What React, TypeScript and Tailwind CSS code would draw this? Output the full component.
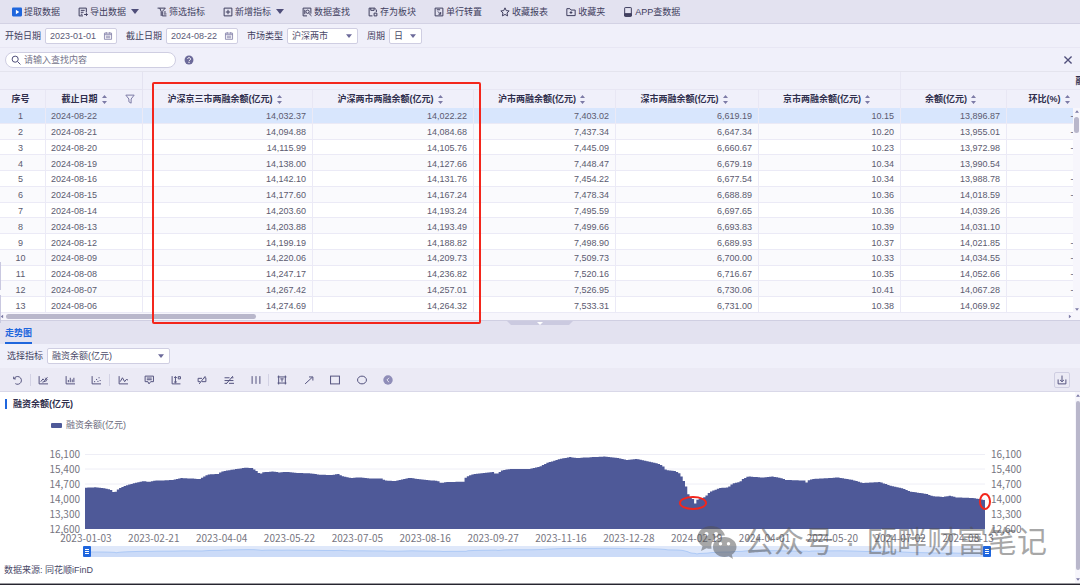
import type { FunctionComponent, ReactNode } from "react";
import { useState } from "react";
import { clsx } from "clsx";

const ICONS: Record<string, ReactNode> = {
  extract: (
    <>
      <rect x="0" y="1" width="18" height="16" rx="2" fill="#1f66dd" stroke="none" />
      <path d="M7 5v8l6-4z" fill="#fff" stroke="none" />
    </>
  ),
  export: <path d="M15 10V2H2v14h7M5 6h7M5 9.500h5M5 13h3M11 13.500h6M14.500 11l2.500 2.500-2.500 2.500" />,
  filter: <path d="M1 2h14L9.500 8v8H17M5 2l2.500 6v8M12 9h4M12 12.500h5" />,
  add: <path d="M2 2h14v14H2zM9 5v8M5 9h8" />,
  find: (
    <>
      <path d="M9 16H2V2h14v10M5 5v8" />
      <circle cx="10" cy="8.500" r="3" />
      <path d="M12 11l5 5" />
    </>
  ),
  save: (
    <>
      <path d="M8 16H2V2h10l3 3v4M5 2v4h6V2" />
      <path d="M11 11h5v5h-5z" />
    </>
  ),
  transpose: <path d="M2 2h14v14H2zM5 5h6M7 8l5 5M12 9v4H8" />,
  star: <path d="M9 1.500l2.300 5 5.200.6-3.900 3.600 1.100 5.300L9 13.400 4.300 16l1.100-5.300L1.500 7.100l5.200-.6z" />,
  folder: <path d="M1.500 15.500V3H7l2 2.500h7.500v10zM9 7.500v5M6.500 10h5" />,
  app: (
    <>
      <rect x="3" y="1" width="12" height="16" rx="1" />
      <path d="M3 12h12v4H3z" fill="currentColor" />
    </>
  ),
};

const TOOLBAR = [
  { icon: "extract", label: "提取数据" },
  { icon: "export", label: "导出数据", caret: true },
  { icon: "filter", label: "筛选指标" },
  { icon: "add", label: "新增指标", caret: true },
  { icon: "find", label: "数据查找" },
  { icon: "save", label: "存为板块" },
  { icon: "transpose", label: "单行转置" },
  { icon: "star", label: "收藏报表" },
  { icon: "folder", label: "收藏夹" },
  { icon: "app", label: "APP查数据" },
];

const COLUMNS = [
  "沪深京三市两融余额(亿元)",
  "沪深两市两融余额(亿元)",
  "沪市两融余额(亿元)",
  "深市两融余额(亿元)",
  "京市两融余额(亿元)",
  "余额(亿元)",
  "环比(%)",
];

const ROWS = [
  ["2024-08-22", "14,032.37", "14,022.22", "7,403.02", "6,619.19", "10.15", "13,896.87", "-0.42"],
  ["2024-08-21", "14,094.88", "14,084.68", "7,437.34", "6,647.34", "10.20", "13,955.01", "-0.13"],
  ["2024-08-20", "14,115.99", "14,105.76", "7,445.09", "6,660.67", "10.23", "13,972.98", "-0.13"],
  ["2024-08-19", "14,138.00", "14,127.66", "7,448.47", "6,679.19", "10.34", "13,990.54", "0.01"],
  ["2024-08-16", "14,142.10", "14,131.76", "7,454.22", "6,677.54", "10.34", "13,988.78", "-0.21"],
  ["2024-08-15", "14,177.60", "14,167.24", "7,478.34", "6,688.89", "10.36", "14,018.59", "-0.15"],
  ["2024-08-14", "14,203.60", "14,193.24", "7,495.59", "6,697.65", "10.36", "14,039.26", "0.06"],
  ["2024-08-13", "14,203.88", "14,193.49", "7,499.66", "6,693.83", "10.39", "14,031.10", "0.07"],
  ["2024-08-12", "14,199.19", "14,188.82", "7,498.90", "6,689.93", "10.37", "14,021.85", "-0.09"],
  ["2024-08-09", "14,220.06", "14,209.73", "7,509.73", "6,700.00", "10.33", "14,034.55", "-0.13"],
  ["2024-08-08", "14,247.17", "14,236.82", "7,520.16", "6,716.67", "10.35", "14,052.66", "-0.10"],
  ["2024-08-07", "14,267.42", "14,257.01", "7,526.95", "6,730.06", "10.41", "14,067.28", "-0.02"],
  ["2024-08-06", "14,274.69", "14,264.32", "7,533.31", "6,731.00", "10.38", "14,069.92", "0.05"],
];

const Y_TICKS = ["16,100", "15,400", "14,700", "14,000", "13,300", "12,600"];

const X_TICKS = [
  "2023-01-03",
  "2023-02-21",
  "2023-04-04",
  "2023-05-22",
  "2023-07-05",
  "2023-08-16",
  "2023-09-27",
  "2023-11-16",
  "2023-12-28",
  "2024-02-19",
  "2024-04-01",
  "2024-05-20",
  "2024-07-02",
  "2024-08-13",
];

// turning points of the series, in chart units (900 wide, 75 high)
const POINTS: [number, number][] = [
  [0, 33.7], [10, 33.3], [18, 34], [24, 35.3], [28, 36.7], [29, 40], [32, 36], [36, 33.5],
  [41, 31.5], [48, 29.5], [59, 27], [64, 28], [70, 26.7], [87, 26], [96, 24], [115, 25],
  [120, 22], [123, 20.5], [133, 20], [137, 17.5], [147, 15.7], [161, 13.7], [167, 14],
  [171, 16.5], [175, 20], [178, 18.3], [187, 17.5], [195, 18.5], [200, 17.8], [213, 19],
  [225, 19.3], [235, 20.7], [248, 21], [253, 19.7], [257, 22], [266, 24], [275, 23.3],
  [285, 24.5], [297, 24.5], [300, 26.5], [311, 27], [325, 23.7], [332, 25], [353, 27],
  [356, 29], [362, 28], [379, 27.7], [381, 23], [387, 20.5], [398, 19], [409, 18],
  [411, 20.5], [417, 16.5], [425, 15], [445, 15], [455, 12.5], [462, 9], [475, 5], [485, 3],
  [492, 4], [520, 2.5], [533, 4], [542, 6], [552, 5], [573, 9.5], [578, 12], [581, 16],
  [590, 17], [595, 19.5], [598, 25], [601, 32], [603, 39.5], [605, 43], [608, 45],
  [610, 50], [612, 46], [620, 43], [625, 38], [635, 34], [643, 33.5], [648, 29.5],
  [655, 28], [658, 25], [663, 22.5], [677, 23.5], [688, 22.5], [698, 24.5], [701, 26],
  [720, 26.5], [722, 29], [724, 26], [728, 25], [753, 23.5], [768, 26], [778, 29],
  [795, 28], [805, 31.5], [818, 34.5], [825, 37.5], [842, 40], [847, 42], [858, 43],
  [865, 41.7], [872, 43.5], [888, 44], [897, 45.5], [900, 46.5],
];

const BAR_COUNT = 396;

function valueAt(x: number) {
  const i = Math.max(1, POINTS.findIndex((p) => p[0] >= x));
  const [x0, y0] = POINTS[i - 1];
  const [x1, y1] = POINTS[i];
  return y0 + ((y1 - y0) * (x - x0)) / (x1 - x0);
}

const BAR_PATH = (() => {
  const step = 900 / BAR_COUNT;
  let d = "M0 75";
  for (let i = 0; i < BAR_COUNT; i++) {
    const y = valueAt((i + 0.5) * step).toFixed(1);
    d += `V${y}H${((i + 1) * step).toFixed(2)}`;
  }
  return `${d}V75Z`;
})();

const OVERVIEW_LINE = POINTS.map(([x, y]) => `${x} ${(2 + y * 0.12).toFixed(2)}`).join("L");

const CHART_TOOLS: { label: string; divider?: boolean; art: ReactNode }[] = [
  { label: "重置", art: <path d="M3 3v4h4M3.500 7A7 7 0 1 1 6 15.500" /> },
  { label: "面积图", divider: true, art: <path d="M2 2v14h16M5 12l4-5 3 3 5-6M8 13l8-3M13 5l4 4" /> },
  { label: "柱状图", art: <path d="M2 2v14h16M6 13V9M9.500 13V5M13 13V8M16 13V5" /> },
  { label: "散点图", art: <path d="M2 2v14h16M5.500 12h2M9 8h2M11.500 11.500h2M13.500 5h2M15.500 10h2" /> },
  { label: "折线图", divider: true, art: <path d="M2 2v14h16M4 12l4-7 4 7 3-4 3 1" /> },
  { label: "标注", art: <path d="M2 2h15v10h-5l-3 4-2-4H2zM5 5.500h9M5 8.500h9" /> },
  { label: "坐标轴", art: <path d="M2 2v14h15M8 3v11M5.500 5L8 3l2.500 2M5.500 12L8 14l2.500-2M13 3h4v4h-4z" /> },
  { label: "平均线", art: <path d="M2 12V6h7M2 12h4M9 12h7V5h-3M4 16L15 2" /> },
  { label: "对比线", art: <path d="M1 5h9M1 10h16M1 15h4M9 15h9M4 16L16 2M13 5h4" /> },
  { label: "网格线", art: <path d="M2 2v14M9 2v14M16 2v14" /> },
  {
    label: "文本",
    divider: true,
    art: <path d="M3 1v16M15 1v16M1 3.500h16M1 14.500h16M6 7h6M9 7v5" />,
  },
  { label: "箭头", art: <path d="M2 16L15 4M9 3.500h7V10" /> },
  { label: "矩形", art: <rect x="1" y="2" width="16" height="14" /> },
  { label: "椭圆", art: <ellipse cx="9" cy="9" rx="8" ry="7" /> },
  {
    label: "收起",
    art: (
      <>
        <circle cx="9" cy="9" r="8.500" fill="#8f8db8" stroke="none" />
        <path d="M11 5L7 9l4 4" stroke="#e3e2f0" />
      </>
    ),
  },
];

function Icon({ children, className = "size-2.5" }: { children: ReactNode; className?: string }) {
  return (
    <svg
      viewBox="0 0 18 18"
      className={clsx("shrink-0 overflow-visible", className)}
      fill="none"
      stroke="currentColor"
      strokeWidth="1.8"
      aria-hidden="true"
    >
      {children}
    </svg>
  );
}

function Caret({ className }: { className?: string }) {
  return (
    <svg viewBox="0 0 8 5" className={clsx("shrink-0", className)} fill="currentColor" aria-hidden="true">
      <path d="M0 0h8L4 5z" />
    </svg>
  );
}

function SortMark() {
  return (
    <svg viewBox="0 0 5 9" className="w-[5px] h-[9px] shrink-0" fill="#7d7ba6" aria-hidden="true">
      <path d="M2.500 0L5 3H0zM2.500 9L0 6h5z" />
    </svg>
  );
}

function DateField({ id, label, value }: { id: string; label: string; value: string }) {
  return (
    <div className="flex items-center gap-1">
      <label htmlFor={id}>{label}</label>
      <div className="flex h-4 w-18 items-center rounded-xs border border-[#cfcee2] bg-white pr-1">
        <input
          id={id}
          defaultValue={value}
          className="w-full min-w-0 pl-1 text-[9px] leading-3 text-[#5b5a78] outline-none"
        />
        <Icon className="size-2 text-[#7d7ba6]">
          <path d="M1 2.500h16v14H1zM1 6h16M5 0v4M13 0v4M4 9.500h10M4 13h10" />
        </Icon>
      </div>
    </div>
  );
}

function SelectField({
  id,
  label,
  value,
  width,
}: {
  id: string;
  label: string;
  value: string;
  width: string;
}) {
  return (
    <div className="flex items-center gap-1">
      <label htmlFor={id}>{label}</label>
      <div className={clsx("relative", width)}>
        <select
          id={id}
          className="block h-4 w-full appearance-none rounded-xs border border-[#cfcee2] bg-white pl-1 text-[9px] leading-3 text-[#4a4968] outline-none"
        >
          <option>{value}</option>
        </select>
        <Caret className="pointer-events-none absolute right-1.5 top-1.5 h-1 w-1.5 text-[#6c6a9a]" />
      </div>
    </div>
  );
}

function DataTable() {
  return (
    <table className="h-[241px] w-[1268px] table-fixed border-separate border-spacing-0 leading-3">
      <colgroup>
        <col className="w-[46px]" />
        <col className="w-[97px]" />
        <col className="w-[170px]" />
        <col className="w-[161px]" />
        <col className="w-[142px]" />
        <col className="w-[143px]" />
        <col className="w-[142px]" />
        <col className="w-[106px]" />
        <col className="w-[91px]" />
        <col />
      </colgroup>
      <thead className="bg-[#f0f0fa] text-[#2f2e4c]">
        <tr className="h-[18px]">
          <td colSpan={2} className="border-r border-b border-[#e4e3f1]" />
          <td colSpan={5} className="border-r border-b border-[#e8e7f4]" />
          <th colSpan={3} scope="colgroup" className="border-b border-[#e8e7f4] font-bold">
            融资
          </th>
        </tr>
        <tr className="h-[18px]">
          <th scope="col" className="border-r border-[#e8e7f4] pr-1 font-bold">
            序号
          </th>
          <th scope="col" className="border-r border-[#e4e3f1] font-bold">
            <div className="flex items-center">
              <span className="flex flex-1 items-center justify-center gap-1 pr-0.5">
                截止日期
                <SortMark />
              </span>
              <button type="button" aria-label="筛选" className="w-[18px] pl-px text-[#7d7ba6]">
                <Icon>
                  <path d="M1.500 2h15L11 9v7.500L7 14V9z" />
                </Icon>
              </button>
            </div>
          </th>
          {COLUMNS.map((column) => (
            <th key={column} scope="col" className="border-r border-[#e8e7f4] font-bold">
              <div className="flex items-center justify-center gap-1 pr-1.5 whitespace-nowrap">
                {column}
                <SortMark />
              </div>
            </th>
          ))}
          <td />
        </tr>
      </thead>
      <tbody className="text-[#5b5a70] [&_td]:pt-0.5">
        {ROWS.map(([date, ...values], index) => (
          <tr
            key={date}
            className={clsx(index === 0 ? "bg-[#d8e6fd]" : index % 2 ? "bg-[#fafafd]" : "bg-white")}
          >
            <td className="border-r border-b border-[#ebeaf6] pr-1 text-center">{index + 1}</td>
            <td className="border-r border-b border-[#ebeaf6] pl-[5px]">{date}</td>
            {values.map((value, i) => (
              <td key={COLUMNS[i]} className="border-r border-b border-[#ebeaf6] pr-1.5 text-right">
                {value}
              </td>
            ))}
            <td className="border-b border-[#ebeaf6]" />
          </tr>
        ))}
      </tbody>
    </table>
  );
}

function AxisLabels({ className }: { className: string }) {
  return (
    <div className={clsx("flex flex-col text-[10px] leading-[15px] text-[#76757f]", className)}>
      {Y_TICKS.map((tick) => (
        <span key={tick}>{tick}</span>
      ))}
    </div>
  );
}

const THUMB =
  "pointer-events-none absolute inset-x-[-4px] top-0 h-[11px] appearance-none bg-transparent [&::-webkit-slider-thumb]:pointer-events-auto [&::-webkit-slider-thumb]:h-[11px] [&::-webkit-slider-thumb]:w-2 [&::-webkit-slider-thumb]:appearance-none [&::-webkit-slider-thumb]:rounded-[1px] [&::-webkit-slider-thumb]:border-x-2 [&::-webkit-slider-thumb]:border-y-3 [&::-webkit-slider-thumb]:border-[#1f66dd] [&::-webkit-slider-thumb]:bg-[repeating-linear-gradient(#fff_0_1px,#1f66dd_1px_2px)]";

function Chart() {
  return (
    <div className="min-w-0 flex-1 pb-1.5">
      <h2 className="flex h-6 items-center gap-1.5 pl-[5px] text-[9px] font-bold text-[#2f2e4c]">
        <span className="h-2.5 w-0.5 bg-[#1f66dd]" />
        融资余额(亿元)
      </h2>
      <div className="flex h-[18px] items-center gap-1 pl-[51px] text-[#6b6a7c]">
        <span className="h-[5px] w-[11px] rounded-[1px] bg-[#4e5998]" />
        融资余额(亿元)
      </div>

      <div className="mt-3 flex font-['Noto_Sans_CJK_SC',sans-serif]">
        <AxisLabels className="w-20 items-end" />
        <div className="relative ml-[5px] flex-1 pt-2">
          <svg viewBox="0 0 900 75" preserveAspectRatio="none" className="block h-[75px] w-full">
            <path
              d="M0 .5h900M0 15h900M0 30h900M0 45h900M0 60h900"
              stroke="#eeeef6"
              vectorEffect="non-scaling-stroke"
            />
            <path d={BAR_PATH} fill="#4e5998" />
          </svg>
          <span className="absolute right-[278px] top-[50px] h-3.5 w-7 rounded-[50%] border-2 border-[#f3261c]" />
          <span className="absolute -right-1.5 top-[47px] h-[17px] w-3 rounded-[50%] border-2 border-[#f3261c]" />
        </div>
        <AxisLabels className="w-[90px] pl-1.5" />
      </div>
      <div className="-mt-1 mr-[73px] ml-[52px] flex h-3 font-['Noto_Sans_CJK_SC',sans-serif] text-[10px] leading-3 text-[#76757f]">
        {X_TICKS.map((tick) => (
          <span key={tick} className="flex flex-1 justify-center">
            {tick}
          </span>
        ))}
      </div>

      <div className="relative mt-0.5 mr-[88px] ml-[87px] h-[11px] bg-[#dfe8fa]">
        <svg viewBox="0 0 900 11" preserveAspectRatio="none" className="block h-full w-full">
          <path d={`M0 11L${OVERVIEW_LINE}L900 11Z`} fill="#cbdbf8" />
          <path
            d={`M${OVERVIEW_LINE}`}
            fill="none"
            stroke="#aecaf6"
            vectorEffect="non-scaling-stroke"
          />
        </svg>
        <input type="range" aria-label="开始" defaultValue={0} className={THUMB} />
        <input type="range" aria-label="结束" defaultValue={100} className={THUMB} />
      </div>
      <p className="mt-1.5 h-3.5 pl-1 leading-3.5 text-[#4a4968]">数据来源: 同花顺iFinD</p>
    </div>
  );
}

function Watermark() {
  return (
    <div className="pointer-events-none absolute right-[33px] top-[130px] flex items-center text-[30px] leading-10 font-normal text-[#505050]/50">
      <svg viewBox="0 0 40 34" className="mr-[7px] h-[34px] w-10" aria-hidden="true">
        <path
          fill="currentColor"
          fillRule="evenodd"
          d="M14 1C6.500 1 .5 6 .5 12.500c0 3.600 2 6.700 5 8.800L4 26l5.500-2.800c1.800.5 3.200.7 5 .6C13 16 19 10 28 10.500 26.500 5 21 1 14 1zM9.500 7a2 2 0 1 1 0 4 2 2 0 0 1 0-4zm9.500 0a2 2 0 1 1 0 4 2 2 0 0 1 0-4z"
        />
        <path
          fill="currentColor"
          fillRule="evenodd"
          d="M27.500 12C21 12 16 16.400 16 22s5 10 11.500 10c1.500 0 2.800-.3 4.200-.7L36 34l-1.200-4.200c2.800-2 4.700-4.600 4.700-7.800 0-5.600-5.500-10-12-10zM23.500 17a1.700 1.700 0 1 1 0 3.400 1.700 1.700 0 0 1 0-3.400zm8 0a1.700 1.700 0 1 1 0 3.400 1.700 1.700 0 0 1 0-3.400z"
        />
      </svg>
      <span>公众号</span>
      <span className="w-[33px] text-center">·</span>
      <span>瓯畔财富笔记</span>
    </div>
  );
}

const App: FunctionComponent = () => {
  const [keyword, setKeyword] = useState("");

  return (
    <div className="w-full overflow-hidden bg-[#f0f0fa] font-['Liberation_Sans','Noto_Sans_CJK_SC',sans-serif] text-[9px] leading-3 text-[#3f3e5e]">
      <header className="flex h-6 items-center gap-[18px] border-b border-[#d3d2e4] bg-[#e3e2f0] pl-3">
        {TOOLBAR.map((item) => (
          <button
            key={item.label}
            type="button"
            className="flex items-center gap-0.5 whitespace-nowrap text-[#3f3e5e]"
          >
            <Icon>{ICONS[item.icon]}</Icon>
            {item.label}
            {item.caret && <Caret className="ml-[3px] h-[5px] w-2 text-[#4f4e7a]" />}
          </button>
        ))}
      </header>

      <div className="flex h-6 items-center gap-[9px] border-b border-[#e8e7f4] pl-[5px]">
        <DateField id="start" label="开始日期" value="2023-01-01" />
        <DateField id="end" label="截止日期" value="2024-08-22" />
        <SelectField id="market" label="市场类型" value="沪深两市" width="w-[71px]" />
        <SelectField id="period" label="周期" value="日" width="w-[33px]" />
      </div>

      <div className="flex h-6 items-center border-b border-[#e4e4ee] pl-[5px]">
        <label className="flex h-4 w-[171px] items-center gap-[3px] rounded-full border border-[#cfcee2] bg-white pl-[5px] text-[#4f4e7a]">
          <Icon>
            <circle cx="7.500" cy="7.500" r="5.500" />
            <path d="M12 12l5 5" />
          </Icon>
          <input
            value={keyword}
            onChange={(e) => setKeyword(e.target.value)}
            placeholder="请输入查找内容"
            className="w-full min-w-0 text-[9px] leading-3 outline-none placeholder:text-[#76758c]"
          />
        </label>
        <button type="button" aria-label="帮助" className="ml-2">
          <Icon>
            <circle cx="9" cy="9" r="8" fill="#6c6a9a" stroke="none" />
            <path d="M6.500 7.200a2.600 2.600 0 1 1 4 2.300Q9 10.200 9 11.200M9 12.500v2" stroke="#fff" />
          </Icon>
        </button>
        <button type="button" aria-label="关闭" className="mr-2 ml-auto text-[#4f4e7a]">
          <Icon className="size-2">
            <path d="M1 1l16 16M17 1L1 17" strokeWidth="3" />
          </Icon>
        </button>
      </div>

      <section className="relative">
        <div className="overflow-hidden">
          <DataTable />
        </div>
        <div className="absolute top-9 right-0 flex h-[205px] w-[7px] flex-col items-center bg-[#f7f6fc] py-0.5">
          <Caret className="h-[3px] w-1 rotate-180 text-[#7d7ba6]" />
          <span className="mt-1 h-4 w-[5px] rounded-full bg-[#b9b7cb]" />
          <Caret className="mt-auto h-[3px] w-1 text-[#7d7ba6]" />
        </div>
        <div className="flex h-2 items-center border-b border-[#d0cfe2] bg-[#f7f6fc] pr-2">
          <Caret className="h-[3px] w-1 rotate-90 text-[#7d7ba6]" />
          <span className="ml-0.5 h-[5px] w-[250px] rounded-full bg-[#b9b7cb]" />
          <Caret className="ml-auto h-[3px] w-1 -rotate-90 text-[#7d7ba6]" />
        </div>
        <span className="absolute top-[190px] left-0 h-7 w-px bg-[#c9c8e0]" />
        <span className="absolute top-[223px] left-0 h-7 w-px bg-[#c9c8e0]" />
        {/* highlight round the two total columns */}
        <span className="absolute top-2.5 left-[152px] h-[242px] w-[329px] rounded-xs border-2 border-[#f3261c]" />
      </section>

      <nav className="flex h-[23px] items-stretch justify-between bg-[#e3e2f0] pl-[5px]">
        <button type="button" className="border-b-2 border-[#1f66dd] pt-[3px] font-bold text-[#1f66dd]">
          走势图
        </button>
        <button type="button" aria-label="折叠" className="self-start">
          <svg viewBox="0 0 66 4" className="h-1 w-[66px]" aria-hidden="true">
            <path d="M0 0h66l-4 4H4z" fill="#cbcae0" />
            <path d="M30 1h6l-3 3z" fill="#fff" />
          </svg>
        </button>
        <span className="w-8" />
      </nav>

      <div className="flex h-6 items-center pl-[7px]">
        <SelectField id="metric" label="选择指标" value="融资余额(亿元)" width="w-[123px]" />
      </div>

      <div className="flex h-6 items-center justify-between border-b border-[#d9d8e8] bg-[#ebeaf5] pr-2.5 pl-[3px]">
        <div className="flex w-[398px] text-[#55547f]">
          {CHART_TOOLS.map((tool) => (
            <button
              key={tool.label}
              type="button"
              aria-label={tool.label}
              className={clsx(
                "flex flex-1 items-center justify-center border-l py-px",
                tool.divider ? "border-[#d3d2e4]" : "border-transparent"
              )}
            >
              <Icon>{tool.art}</Icon>
            </button>
          ))}
        </div>
        <button
          type="button"
          aria-label="下载"
          className="flex size-4 items-center justify-center rounded-xs border border-[#cfcee2] text-[#55547f]"
        >
          <Icon>
            <path d="M2 8v8h14V8M9 1v11M5.500 9L9 12l3.500-3" />
          </Icon>
        </button>
      </div>

      <section className="relative flex bg-white">
        <Chart />
        <div className="flex w-[5px] flex-col items-center bg-[#f7f6fc] py-0.5">
          <Caret className="h-[3px] w-1 rotate-180 text-[#7d7ba6]" />
          <span className="mt-1 mb-2 w-1 flex-1 rounded-full bg-[#b9b7cb]" />
          <Caret className="h-[3px] w-1 text-[#7d7ba6]" />
        </div>
        <Watermark />
      </section>
      <footer className="h-0.5 border-t border-[#9a9a9f] bg-[#26252f]" />
    </div>
  );
};

export default App;
